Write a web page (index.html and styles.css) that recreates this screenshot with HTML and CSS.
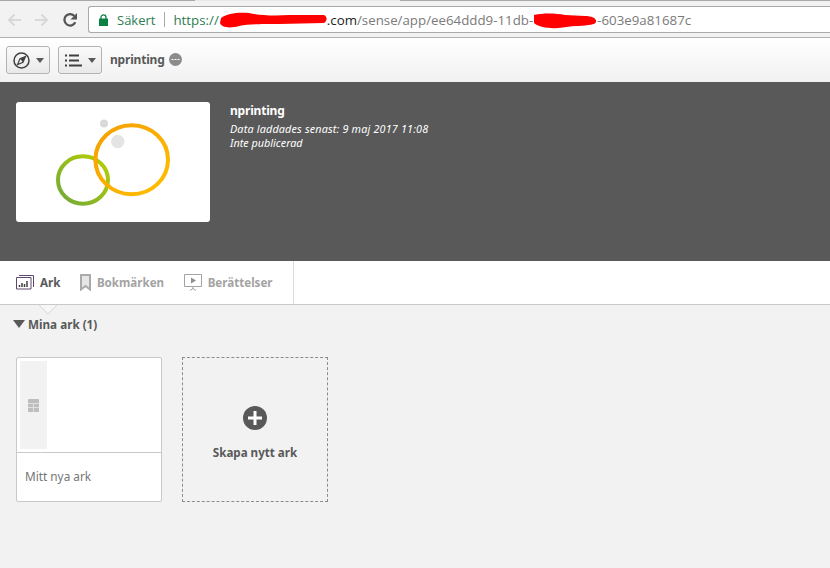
FILE: index.html
```html
<!DOCTYPE html>
<html lang="en">
<head>
  <meta charset="UTF-8" />
  <title>nprinting</title>
  <link rel="stylesheet" href="styles.css">
</head>
<body>

  <!-- Browser bar -->
  <div class="tab-edge"></div>
  <div class="browser-bar">
    <svg class="nav-icon" width="14" height="14" viewBox="0 0 14 14"><path d="M14 7H2M7.500 1.500L2 7l5.500 5.500" fill="none" stroke="#d8d8d8" stroke-width="2"/></svg>
    <svg class="nav-icon" width="14" height="14" viewBox="0 0 14 14"><path d="M0 7h12M6.500 1.500L12 7l-5.500 5.500" fill="none" stroke="#d8d8d8" stroke-width="2"/></svg>
    <svg class="nav-icon" width="14" height="14" viewBox="0 0 14 14"><path d="M12.300 9.300A5.700 5.700 0 1 1 11.400 3" fill="none" stroke="#555" stroke-width="2.300"/><path d="M14 0v6.500H7.500z" fill="#555"/></svg>
    <div class="address">
      <svg class="lock" width="9" height="12" viewBox="0 0 9 12"><path d="M2 5V3.400a2.500 2.500 0 0 1 5 0V5" fill="none" stroke="#0b8043" stroke-width="1.300"/><rect y="4.500" width="9" height="7.500" rx=".5" fill="#0b8043"/></svg>
      <span class="secure">Säkert</span>
      <span class="divider"></span>
      <span class="url"><span class="scheme">https://</span><svg class="redact" width="108" height="17" viewBox="0 0 108 17"><path d="M2 6C8 1 20 0 30 1C40 3 52 4 70 3L105 3C109 5 108 9 105 11L60 12C40 12 30 12 20 14C10 17 2 15 1 11Z" fill="#f00"/></svg><span class="domain">.com</span>/sense/app/ee64ddd9-11db-<svg class="redact" width="64" height="16" viewBox="0 0 64 16"><path d="M1 2C10 0 22 0 32 2L52 3C58 3 64 5 63 9C62 12 56 12 45 13C35 13 28 16 18 15C10 15 3 12 1 10Z" fill="#f00"/></svg>-603e9a81687c</span>
    </div>
  </div>

  <!-- Toolbar -->
  <div class="toolbar">
    <button class="tool-btn">
      <svg width="17" height="17" viewBox="0 0 17 17"><circle cx="8.500" cy="8.500" r="7.500" fill="none" stroke="#404040" stroke-width="1.500"/><path d="M12.500 4.500L7 6.800 4.500 12.500 10 10.200z" fill="none" stroke="#404040" stroke-width="1.200"/><path d="M12.500 4.500L7 6.800 10 10.200z" fill="#404040"/></svg>
      <span class="caret"></span>
    </button>
    <button class="tool-btn">
      <svg width="17" height="13" viewBox="0 0 17 13"><path d="M0 1.500h2M4 1.500h10M0 6.500h2M4 6.500h10M0 11.500h2M4 11.500h13" fill="none" stroke="#404040" stroke-width="2"/></svg>
      <span class="caret"></span>
    </button>
    <span class="app-name">nprinting</span>
    <svg class="status-dot" width="13" height="13" viewBox="0 0 13 13"><circle cx="6.500" cy="6.500" r="6.500" fill="#8c8c8c"/><path d="M2.500 6.500h8" stroke="#fff" stroke-dasharray="2 1"/></svg>
  </div>

  <!-- App header -->
  <div class="app-header">
    <div class="thumb">
      <svg width="194" height="120" viewBox="0 0 194 120">
        <defs>
          <linearGradient id="greenRing" x1="0" y1="1" x2="1" y2="0"><stop offset="0" stop-color="#6fa83a"/><stop offset="1" stop-color="#b9d000"/></linearGradient>
          <linearGradient id="orangeRing" x1="0" y1="0" x2="1" y2="1"><stop offset="0" stop-color="#f59f00"/><stop offset="1" stop-color="#ffbe00"/></linearGradient>
        </defs>
        <circle cx="88" cy="21.500" r="4" fill="#d9d9d9"/>
        <circle cx="101.700" cy="39.500" r="6.700" fill="#e4e4e4"/>
        <ellipse cx="67" cy="78" rx="25" ry="23.700" fill="none" stroke="url(#greenRing)" stroke-width="4"/>
        <ellipse cx="115.700" cy="57.700" rx="36.300" ry="34.500" fill="none" stroke="url(#orangeRing)" stroke-width="4"/>
      </svg>
    </div>
    <div class="app-info">
      <h1>nprinting</h1>
      <p class="loaded">Data laddades senast: 9 maj 2017 11:08</p>
      <p>Inte publicerad</p>
    </div>
  </div>

  <!-- Tabs -->
  <div class="tabs">
    <div class="tab-list">
      <span class="tab active">
        <svg width="18" height="15" viewBox="0 0 18 15"><path d="M3 .500h14.500v11.500M.5 2.500h14.500v11.500H.5z" fill="#fff" stroke="#5b4a6a"/><path d="M3.500 12V10M6 12V8M8.500 12V9M11 12V6" stroke="#404040" stroke-width="1.500"/></svg>
        Ark
      </span>
      <span class="tab">
        <svg width="11" height="17" viewBox="0 0 11 17"><path d="M1 1h9v14.500L5.500 12 1 15.500z" fill="#e6e6e6" stroke="#aaa" stroke-width="2"/></svg>
        Bokmärken
      </span>
      <span class="tab">
        <svg width="18" height="17" viewBox="0 0 18 17"><path d="M.5.500h17v12H.5zM9 13v2M6 16.500l3-2 3 2" fill="none" stroke="#a3a3a3"/><path d="M7 3.500l5 3-5 3z" fill="#8f8f8f"/></svg>
        Berättelser
      </span>
    </div>
    <span class="tab-arrow"></span>
  </div>

  <!-- Sheets -->
  <div class="content">
    <div class="section-title"><span class="section-caret"></span>Mina ark (1)</div>
    <div class="sheets">
      <div class="sheet-card">
        <div class="sheet-preview">
          <div class="sheet-strip">
            <svg width="11" height="13" viewBox="0 0 11 13"><rect width="11" height="13" rx="1" fill="#bdbdbd"/><path d="M0 4.500h11M0 8.500h11M5.500 4.500V13" stroke="#e0e0e0"/></svg>
          </div>
        </div>
        <div class="sheet-label">Mitt nya ark</div>
      </div>
      <div class="new-sheet">
        <svg width="24" height="24" viewBox="0 0 24 24"><circle cx="12" cy="12" r="12" fill="#595959"/><path d="M12 5v14M5 12h14" stroke="#fff" stroke-width="3"/></svg>
        <span>Skapa nytt ark</span>
      </div>
    </div>
  </div>

</body>
</html>
```
FILE: styles.css
```css
* {
  box-sizing: border-box;
}

html,
body {
  height: 100%;
}

body {
  margin: 0;
  font-family: 'Noto Sans', sans-serif;
  background-color: #f2f2f2;
  color: #595959;
  overflow: hidden;
}

/* Browser bar */
.tab-edge {
  height: 1px;
  background: linear-gradient(to right, #a8a8a8 195px, #e8e8e8 195px, #e8e8e8 400px, #a8a8a8 400px);
}

.browser-bar {
  height: 37px;
  padding: 5px 0 0 7px;
  display: flex;
  align-items: flex-start;
  gap: 14px;
  background-color: #f2f2f2;
  border-bottom: 1px solid #b0b0b0;
}

.nav-icon {
  margin-top: 7px;
}

.address {
  flex: 1;
  height: 27px;
  margin-left: -3px;
  padding-left: 10px;
  display: flex;
  align-items: center;
  background-color: #fff;
  border: 1px solid #a9a9a9;
  border-right: none;
  border-radius: 3px 0 0 3px;
  font-family: 'Open Sans', sans-serif;
  font-size: 13px;
  white-space: nowrap;
}

.secure {
  margin-left: 9px;
  color: #2e7d52;
}

.divider {
  width: 1px;
  height: 15px;
  margin: 0 8px 0 9px;
  background-color: #a9a9a9;
}

.url {
  font-size: 13.300px;
  color: #7a7a7a;
}

.scheme {
  color: #2e7d52;
}

.domain {
  color: #222;
}

.redact {
  margin-top: -6px;
  vertical-align: -4px;
}

/* Toolbar */
.toolbar {
  height: 44px;
  padding-left: 6px;
  display: flex;
  align-items: center;
  gap: 8px;
  background: linear-gradient(#fff, #f1f1f1);
}

.tool-btn {
  width: 44px;
  height: 28px;
  padding: 0;
  display: flex;
  align-items: center;
  justify-content: center;
  gap: 6px;
  background: linear-gradient(#fafafa, #e9e9e9);
  border: 1px solid #b3b3b3;
  border-radius: 3px;
}

.caret {
  width: 0;
  height: 0;
  border-left: 4px solid transparent;
  border-right: 4px solid transparent;
  border-top: 5px solid #595959;
}

.app-name {
  margin-top: -2px;
  font-size: 12px;
  letter-spacing: -.2px;
  font-weight: 700;
  color: #595959;
}

.status-dot {
  margin: -2px 0 0 -4px;
}

/* App header */
.app-header {
  height: 179px;
  padding: 20px 16px;
  display: flex;
  gap: 20px;
  background-color: #595959;
  color: #fff;
}

.thumb {
  width: 194px;
  height: 120px;
  background-color: #fff;
  border-radius: 3px;
}

.thumb svg {
  display: block;
}

.app-info h1 {
  margin: 0 0 2px;
  font-size: 12px;
  letter-spacing: -.2px;
  line-height: 18px;
  font-weight: 700;
}

.app-info p {
  margin: 0;
  font-size: 10.800px;
  line-height: 14px;
  font-style: italic;
}

.app-info .loaded {
  letter-spacing: .17px;
}

/* Tabs */
.tabs {
  position: relative;
  height: 44px;
  background-color: #fff;
  border-bottom: 1px solid #c9c9c9;
}

.tab-list {
  width: 294px;
  height: 43px;
  padding-left: 16px;
  display: flex;
  align-items: center;
  gap: 19.500px;
  border-right: 1px solid #dcdcdc;
}

.tab {
  display: flex;
  align-items: center;
  gap: 6px;
  font-size: 11.600px;
  font-weight: 700;
  color: #a3a3a3;
}

.tab.active {
  color: #595959;
}

.tab-arrow {
  position: absolute;
  left: 41px;
  bottom: -7.500px;
  width: 14px;
  height: 14px;
  background-color: #f7f7f7;
  border-right: 1px solid #d4d4d4;
  border-bottom: 1px solid #d4d4d4;
  transform: rotate(45deg);
  clip-path: polygon(100% 0, 100% 100%, 0 100%);
}

/* Sheets */
.content {
  padding: 11px 16px 12px;
}

.section-title {
  display: flex;
  align-items: center;
  gap: 3px;
  margin-left: -3px;
  font-size: 11.700px;
  line-height: 16px;
  font-weight: 700;
}

.section-caret {
  width: 0;
  height: 0;
  border-left: 6px solid transparent;
  border-right: 6px solid transparent;
  border-top: 8px solid #595959;
}

.sheets {
  margin-top: 25px;
  display: flex;
  gap: 20px;
}

.sheet-card {
  width: 146px;
  height: 145px;
  display: flex;
  flex-direction: column;
  background-color: #fff;
  border: 1px solid #c9c9c9;
  border-radius: 2px;
}

.sheet-preview {
  height: 95px;
  padding: 3px;
  border-bottom: 1px solid #c9c9c9;
}

.sheet-strip {
  width: 27px;
  height: 88px;
  display: flex;
  align-items: center;
  justify-content: center;
  background-color: #f2f2f2;
}

.sheet-label {
  flex: 1;
  padding: 0 0 2px 8px;
  display: flex;
  align-items: center;
  font-size: 11.800px;
  color: #757575;
}

.new-sheet {
  width: 146px;
  height: 145px;
  padding-top: 48px;
  display: flex;
  flex-direction: column;
  align-items: center;
  gap: 15px;
  border: 1px dashed #8c8c8c;
  font-size: 11.600px;
  font-weight: 700;
}

.new-sheet span {
  line-height: 16px;
}
```
